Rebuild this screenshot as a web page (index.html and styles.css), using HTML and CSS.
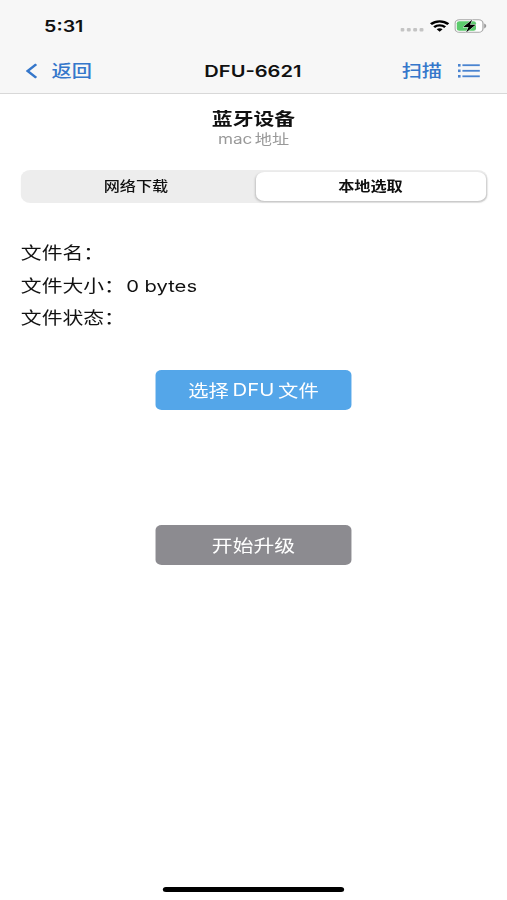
FILE: index.html
```
<!DOCTYPE html>
<html lang="zh-CN">
<head>
    <meta charset="UTF-8">
    <meta name="viewport" content="width=device-width, initial-scale=1.0">
    <title>DFU-6621</title>
    <link rel="stylesheet" href="styles.css">
</head>
<body>
    <div class="screen">
        <header class="top">
            <div class="status">
                <span class="time">5:31</span>
                <div class="status-icons">
                    <svg class="signal" width="20" height="4" viewBox="0 0 20 4" fill="#c4c4c4">
                        <rect x="0" y="0" width="3.2" height="3.6" rx="1"/>
                        <rect x="5.2" y="0" width="3.2" height="3.6" rx="1"/>
                        <rect x="10.4" y="0" width="3.2" height="3.6" rx="1"/>
                        <rect x="15.6" y="0" width="3.2" height="3.6" rx="1"/>
                    </svg>
                    <svg class="wifi" width="16" height="12" viewBox="0 0 16 12" fill="none" stroke="#000">
                        <path stroke-width="2.3" d="M.9 4.2C5 .3 11 .3 15.1 4.2"/>
                        <path stroke-width="2.2" d="M3.5 7.1C6.1 4.8 9.9 4.8 12.5 7.1"/>
                        <path fill="#000" stroke="none" d="M5.6 9.2C7 8 9 8 10.4 9.2L8 11.8z"/>
                    </svg>
                    <svg class="battery" width="27" height="14" viewBox="0 0 27 14">
                        <rect x=".6" y=".7" width="22.8" height="12.6" rx="3.6" fill="#fff" stroke="#a5a5a5"/>
                        <rect x="2" y="2.2" width="15.7" height="9.6" rx="2" fill="#5ccb6d"/>
                        <path d="M24.4 4.6c2.2.7 2.2 4.1 0 4.8z" fill="#999"/>
                        <path d="M14.6 .8L7.2 8h4.4L9.6 13.4 17.4 5.8h-4.6z" fill="#000" stroke="#f7f7f7" stroke-width=".8" paint-order="stroke"/>
                    </svg>
                </div>
            </div>
            <nav class="nav">
                <a class="back">
                    <svg width="10" height="16" viewBox="0 0 10 16" fill="none" stroke="#3577cb" stroke-width="2.3">
                        <path d="M8.6 1.2L1.6 8l7 6.8"/>
                    </svg>
                    <span>返回</span>
                </a>
                <h1>DFU-6621</h1>
                <div class="actions">
                    <a>扫描</a>
                    <svg width="18" height="14" viewBox="0 0 18 14" fill="#4a84d0">
                        <rect x="0" y="0" width="2.1" height="2.6"/>
                        <rect x="0" y="5.5" width="2.1" height="2.6"/>
                        <rect x="0" y="11" width="2.1" height="2.6"/>
                        <rect x="3.6" y=".3" width="14.2" height="1.8"/>
                        <rect x="3.6" y="5.9" width="14.2" height="1.8"/>
                        <rect x="3.6" y="11.4" width="14.2" height="1.8"/>
                    </svg>
                </div>
            </nav>
        </header>

        <main>
            <h2>蓝牙设备</h2>
            <p class="mac"><span>mac</span><span>地址</span></p>

            <div class="segment">
                <div class="option">网络下载</div>
                <div class="option selected">本地选取</div>
            </div>

            <div class="info">
                <p>文件名：</p>
                <p>文件大小：<span class="size">0 bytes</span></p>
                <p>文件状态：</p>
            </div>

            <button class="btn choose"><span>选择</span><span>DFU</span><span>文件</span></button>
            <button class="btn start">开始升级</button>
        </main>

        <div class="home-bar"></div>
    </div>
</body>
</html>
```
FILE: styles.css
```
* {
    box-sizing: border-box;
}
body {
    margin: 0;
    background: #fff;
    overflow: hidden;
    font-family: Inter, "Noto Sans CJK SC", sans-serif;
}
h1, h2, p {
    margin: 0;
}
svg {
    display: block;
}
.screen {
    width: 414px;
    height: 900px;
    transform: scaleX(1.2246);
    transform-origin: 0 0;
    display: flex;
    flex-direction: column;
    color: #111;
    font-size: 17px;
}
.top {
    height: 94px;
    background: #f7f7f7;
    border-bottom: 1px solid #d8d8d8;
}
.status {
    height: 49px;
    padding: 3px 16px 0 36px;
    display: flex;
    align-items: center;
    justify-content: space-between;
}
.time {
    font-size: 16px;
    font-weight: 600;
}
.status-icons {
    display: flex;
    align-items: center;
    gap: 4px;
}
.signal {
    margin-top: 8px;
}
.nav {
    height: 44px;
    padding: 0 22px 0 21px;
    display: grid;
    grid-template-columns: 1fr auto 1fr;
    align-items: center;
    color: #3577cb;
}
.back {
    display: flex;
    align-items: center;
    gap: 11px;
}
.back, .actions {
    font-size: 16.5px;
    font-weight: 500;
    line-height: 24px;
}
.nav h1 {
    font-size: 16.4px;
    font-weight: 600;
    color: #111;
}
.actions {
    display: flex;
    align-items: center;
    justify-content: flex-end;
    gap: 13px;
}
main {
    flex: 1;
    padding: 13px 17px 0;
    display: flex;
    flex-direction: column;
    align-items: center;
}
h2 {
    font-size: 17px;
    font-weight: 600;
    line-height: 24px;
}
.mac {
    display: flex;
    gap: 2px;
    font-size: 14px;
    line-height: 16px;
    color: #999;
}
.segment {
    width: 381px;
    height: 33px;
    margin-top: 23px;
    padding: 2px 1px 2px 0;
    display: grid;
    grid-template-columns: 192px 188px;
    border-radius: 8px;
    background: #ededed;
}
.option {
    border-radius: 7px;
    font-size: 13.2px;
    font-weight: 500;
    line-height: 29px;
    text-align: center;
}
.option:first-child {
    padding-right: 3px;
}
.selected {
    font-weight: 600;
    background: #fff;
    box-shadow: 0 1px 2px rgba(0, 0, 0, .2);
}
.info {
    width: 100%;
    margin-top: 34px;
    line-height: 32.6px;
}
.size {
    margin-left: 1px;
    font-size: 16.5px;
}
.btn {
    width: 160px;
    height: 40px;
    padding: 0;
    border: 0;
    border-radius: 5px;
    font: inherit;
    color: #fff;
    display: flex;
    align-items: center;
    justify-content: center;
    gap: 3px;
}
.choose {
    margin-top: 35px;
    font-size: 16.6px;
    background: #54a6e9;
}
.start {
    margin-top: 115px;
    background: #8c8b90;
}
.home-bar {
    width: 148px;
    height: 5px;
    margin: 0 auto 8px;
    border-radius: 3px;
    background: #000;
}
```
